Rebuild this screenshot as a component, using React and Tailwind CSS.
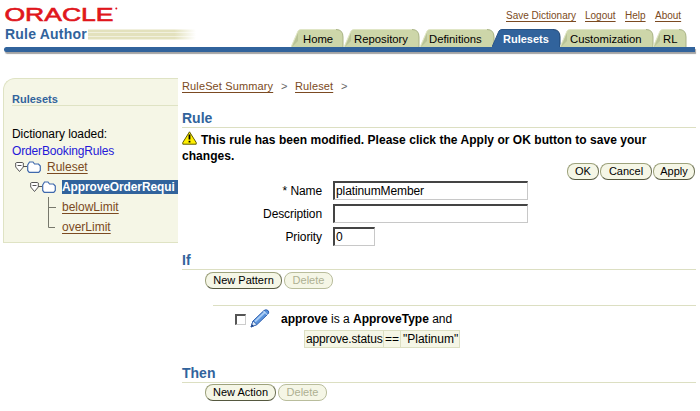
import React from "react";

const link = "text-[#7b4a22] underline underline-offset-2";

function Tab({ label, w, active, cls, textCls }) {
  const shape = `M0 18 L7 2 Q8 .5 10 .5 H${w - 8} Q${w - 1} .5 ${w - 1} 8 V18 Z`;
  return (
    <div className={"relative h-[18px] shrink-0 " + cls}>
      <svg className="absolute inset-0" width={w} height="18" viewBox={`0 0 ${w} 18`}>
        <path d={shape} fill={active ? "#31639c" : "#cdd6a9"} />
        <path
          d={`M0 18 L7 2 Q8 .5 10 .5 H${w - 8}`}
          fill="none"
          stroke={active ? "#2a5588" : "#e0e6c6"}
        />
        <path
          d={`M${w - 8} .5 Q${w - 1} .5 ${w - 1} 8 V18`}
          fill="none"
          stroke={active ? "#1f4470" : "#a9b385"}
        />
        {!active && <path d="M1 18 L7 4 V12 Z" fill="#b9c396" />}
      </svg>
      <span className={"relative block whitespace-nowrap leading-[20px] " + textCls}>{label}</span>
    </div>
  );
}

function Button({ children, disabled, cls }) {
  return (
    <button
      className={
        "block h-[17px] shrink-0 whitespace-nowrap rounded-[8px] border bg-[#f5f6e6] text-center text-[11px] leading-[15px] " +
        (disabled
          ? "border-[#b9bd9c] text-[#adb092] "
          : "border-[#9da27c] border-b-[#55583f] border-r-[#6d7154] text-black ") +
        cls
      }
    >
      {children}
    </button>
  );
}

function Folder() {
  return (
    <svg width="14" height="12" viewBox="0 0 14 12" className="shrink-0">
      <path d="M.7 4 L2.5 1 H6 L7.5 3 H11.5 L13.3 5 V9.5 L11.8 11.3 H2.2 L.7 9.5 Z" fill="#fff" stroke="#3f69ad" strokeWidth="1.2" />
    </svg>
  );
}

function Toggle() {
  return (
    <svg width="12" height="12" viewBox="0 0 12 12" className="shrink-0">
      <path d="M.7 2 L1.5 1.5 H7.5 L8.3 2 V6 L4.5 10.5 L.7 6 Z" fill="#fff" stroke="#555" strokeLinejoin="round" />
      <path d="M2.5 4.5 H6.5 M8 5.5 H12" stroke="#555" />
    </svg>
  );
}

function Warning() {
  return (
    <svg width="15" height="14" viewBox="0 0 15 14" className="shrink-0">
      <path d="M7.5 .8 L14.2 11.5 V13.2 H.8 V11.5 Z" fill="#ffef00" stroke="#5f5a00" strokeLinejoin="round" />
      <path d="M7.5 3.5 V8.5 M7.5 9.8 V11.5" stroke="#000" strokeWidth="1.8" />
    </svg>
  );
}

function Pencil() {
  return (
    <svg width="20" height="19" viewBox="0 0 20 19" className="shrink-0">
      <path d="M1 18 L3 12 L14 1.5 Q16 0 18 1.5 Q19.5 3 18 5 L7 15.5 Z" fill="#5b94dc" stroke="#2f5fae" />
      <path d="M5 12.5 L15 3" stroke="#a9cdf5" strokeWidth="1.8" />
      <path d="M3 12 L7 15.5 L1 18 Z" fill="#dce8f5" stroke="#2f5fae" strokeWidth=".8" />
      <path d="M1 18 L2 15.3 L3.8 17 Z" fill="#173a7a" />
      <path d="M13.5 2 L17.5 6" stroke="#d9e8fa" />
    </svg>
  );
}

const field =
  "block h-[19px] rounded-none border border-t-2 border-l-2 border-t-[#444] border-l-[#444] border-b-[#c8c8c8] border-r-[#c8c8c8] bg-white pl-[1px] text-[12px] leading-[16px] text-black outline-none ";

export default function App() {
  return (
    <div className="h-[411px] w-[700px] overflow-hidden bg-white font-['Liberation_Sans',Arial,sans-serif] text-[12px] leading-[16px] text-black">
      <header className="flex h-[47px] justify-between pl-[4px] pr-[13px]">
        <div className="w-[200px] pt-[2px]">
          <svg width="120" height="22" viewBox="0 0 120 22" className="block overflow-visible">
            <text x="0.5" y="19" fontSize="18" textLength="109" lengthAdjust="spacingAndGlyphs" fill="#e0161c" stroke="#e0161c" strokeWidth=".6">ORACLE</text>
            <circle cx="112.3" cy="6.5" r="1" fill="#e0161c" />
          </svg>
          <div className="flex items-start">
            <h1 className="w-[84px] whitespace-nowrap pl-[1px] text-[14px] font-bold leading-[21px] tracking-[0.2px] text-[#31639c]">Rule Author</h1>
            <div className="mt-[5px] flex h-[11px] w-[108px] flex-col justify-between bg-linear-to-r from-[#e3e1bd] from-80% to-white">
              <i className="h-px bg-white/50" />
              <i className="h-px bg-white/50" />
              <i className="h-px bg-white/50" />
              <i className="h-px bg-white/50" />
            </div>
          </div>
        </div>
        <div className="flex w-[396px] flex-col">
          <nav className="flex h-[29px] pl-[215px] pt-[8px] text-[10px] leading-[16px]">
            <a className={link + " mr-[9px] w-[70px] whitespace-nowrap"}>Save Dictionary</a>
            <a className={link + " mr-[9px] w-[31px]"}>Logout</a>
            <a className={link + " mr-[9px] w-[21px]"}>Help</a>
            <a className={link}>About</a>
          </nav>
          <div className="flex text-[11.3px]">
            <Tab label="Home" w={53} cls="w-[53px]" textCls="pl-[12px]" />
            <Tab label="Repository" w={76} cls="w-[76px]" textCls="pl-[10px]" />
            <Tab label="Definitions" w={75} cls="w-[72px]" textCls="pl-[9px]" />
            <Tab label="Rulesets" w={69} active cls="w-[68px]" textCls="pl-[11px] text-[11px] font-bold text-white" />
            <Tab label="Customization" w={94} cls="w-[93px]" textCls="pl-[10px]" />
            <Tab label="RL" w={34} cls="w-[34px]" textCls="pl-[10px]" />
          </div>
        </div>
      </header>
      <div className="ml-[4px] h-[5px] w-[691px] rounded-l-full rounded-r-[2px] bg-[#31639c] shadow-[1px_2px_1px_#a3a3a3]" />

      <div className="flex">
        <aside className="mt-[26px] h-[165px] w-[178px] shrink-0 overflow-hidden pl-[3px]">
          <div className="h-[165px] overflow-hidden rounded-tl-[12px] border border-r-0 border-[#dfe3c4] bg-[#f5f6e6] pl-[8px]">
            <h2 className="h-[27px] border-b border-[#dfe3c4] pt-[12px] text-[11px] font-bold leading-[16px] text-[#31639c]">Rulesets</h2>
            <p className="mt-[20px] leading-[17px] tracking-[-0.05px]">Dictionary loaded:</p>
            <p className="leading-[16px] tracking-[-0.15px] text-[#2418d8]">OrderBookingRules</p>
            <div className="-mt-[2px] ml-[3px] flex h-[20px] items-center">
              <Toggle />
              <Folder />
              <a className={link + " ml-[6px]"}>Ruleset</a>
            </div>
            <div className="ml-[18px] flex h-[20px] items-center">
              <Toggle />
              <Folder />
              <b className="ml-[6px] h-[14px] w-[116px] whitespace-nowrap bg-[#31639c] text-[11.9px] leading-[15px] tracking-[-0.06px] text-white">ApproveOrderRequi</b>
            </div>
            <div className="ml-[36px] flex h-[40px]">
              <svg width="14" height="32" viewBox="0 0 14 32">
                <path d="M.5 0 V30.5 H7 M.5 10.5 H8" fill="none" stroke="#77786c" />
              </svg>
              <div className="leading-[20px]">
                <a className={link + " block"}>belowLimit</a>
                <a className={link + " block"}>overLimit</a>
              </div>
            </div>
          </div>
        </aside>

        <main className="ml-[4px] w-[514px] pt-[26px]">
          <div className="flex h-[30px] text-[11px] leading-[17px] tracking-[0.13px] text-[#666]">
            <a className={link + " w-[91px] whitespace-nowrap"}>RuleSet Summary</a>
            <span className="ml-[8px] w-[14px]">&gt;</span>
            <a className={link + " w-[39px]"}>Ruleset</a>
            <span className="ml-[7px]">&gt;</span>
          </div>
          <h2 className="h-[20px] border-b border-[#dcdfc2] text-[14px] font-bold leading-[20px] text-[#31639c]">Rule</h2>
          <div className="flex h-[23px] items-start whitespace-nowrap pt-[3px] font-bold">
            <Warning />
            <span className="ml-[4px] mt-[1px] leading-[17px] tracking-[0.04px]">This rule has been modified. Please click the Apply or OK button to save your</span>
          </div>
          <p className="-mt-[2px] h-[14px] font-bold leading-[14px] tracking-[0.04px]">changes.</p>
          <div className="flex justify-end gap-[1px] pr-[1px]">
            <Button cls="w-[32px]">OK</Button>
            <Button cls="w-[52px]">Cancel</Button>
            <Button cls="w-[42px]">Apply</Button>
          </div>
          <div className="mt-[1px] grid grid-cols-[140px_1fr] gap-x-[11px] gap-y-[4px] text-right leading-[20px] tracking-[-0.1px]">
            <label className="h-[19px]">* Name</label>
            <input className={field + "w-[195px]"} defaultValue="platinumMember" />
            <label className="h-[19px]">Description</label>
            <input className={field + "w-[195px]"} />
            <label className="h-[19px]">Priority</label>
            <input className={field + "w-[42px]"} defaultValue="0" />
          </div>
          <h2 className="mt-[4px] h-[20px] border-b border-[#dcdfc2] text-[14px] font-bold leading-[20px] text-[#31639c]">If</h2>
          <div className="ml-[23px] mt-[2px] flex gap-[2px]">
            <Button cls="w-[77px]">New Pattern</Button>
            <Button disabled cls="w-[49px]">Delete</Button>
          </div>
          <div className="ml-[31px] mt-[16px] border-t border-[#dcdfc2] pt-[3px]">
            <div className="flex h-[21px] items-start">
              <span className="ml-[22px] mt-[5px] h-[11px] w-[11px] border border-t-2 border-l-2 border-[#ccc] border-t-[#555] border-l-[#555]" />
              <span className="ml-[4px]"><Pencil /></span>
              <span className="ml-[11px] mt-[2px] whitespace-nowrap"><b>approve</b> is a <b>ApproveType</b> and</span>
            </div>
            <div className="ml-[91px] flex h-[18px] w-[156px] divide-x divide-[#dcdfc2] whitespace-nowrap border border-[#dcdfc2] bg-[#f5f6e6] leading-[16px]">
              <span className="w-[79px] pl-[1px] tracking-[-0.15px]">approve.status</span>
              <span className="w-[17px] text-center">==</span>
              <span className="pl-[2px]">"Platinum"</span>
            </div>
          </div>
          <h2 className="mt-[15px] h-[20px] border-b border-[#dcdfc2] text-[14px] font-bold leading-[20px] text-[#31639c]">Then</h2>
          <div className="ml-[23px] mt-[1px] flex gap-[2px]">
            <Button cls="w-[71px]">New Action</Button>
            <Button disabled cls="w-[49px]">Delete</Button>
          </div>
        </main>
      </div>
    </div>
  );
}
